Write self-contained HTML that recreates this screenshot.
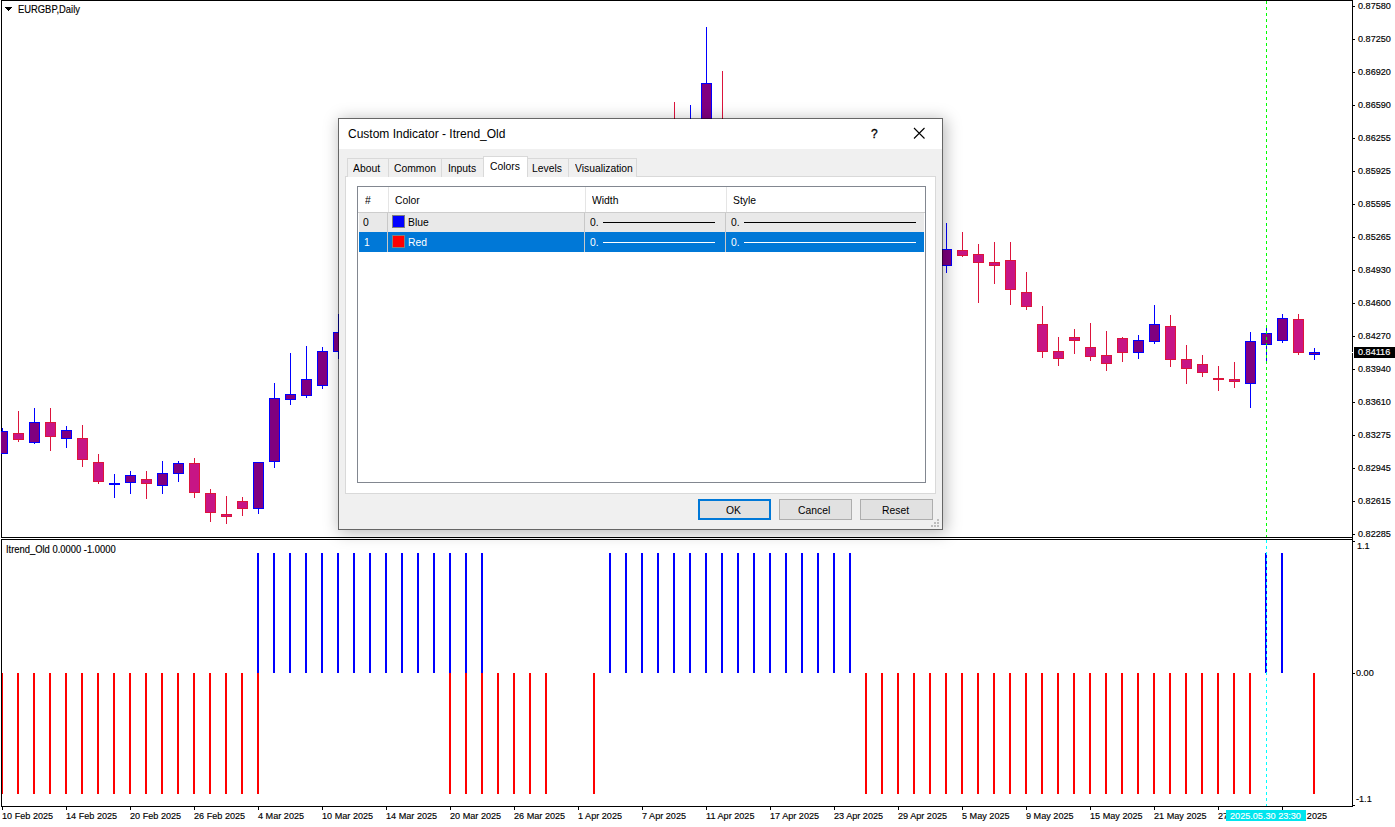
<!DOCTYPE html>
<html><head><meta charset="utf-8"><style>
html,body{margin:0;padding:0;background:#fff;width:1395px;height:827px;overflow:hidden;position:relative}
.ax{position:absolute;font-family:"Liberation Sans",sans-serif;font-size:9.8px;line-height:13px;color:#000;white-space:pre;transform:scaleX(.93);transform-origin:0 0;-webkit-text-stroke:0.15px currentColor}
.dl{position:absolute;font-family:"Liberation Sans",sans-serif;font-size:11px;line-height:14px;color:#000;white-space:pre;transform:scaleX(.94);transform-origin:0 0}
</style></head><body>
<svg width="1395" height="827" style="position:absolute;left:0;top:0" shape-rendering="crispEdges"><rect x="257" y="553" width="2" height="120" fill="#0000FF"/><rect x="273" y="553" width="2" height="120" fill="#0000FF"/><rect x="289" y="553" width="2" height="120" fill="#0000FF"/><rect x="305" y="553" width="2" height="120" fill="#0000FF"/><rect x="321" y="553" width="2" height="120" fill="#0000FF"/><rect x="337" y="553" width="2" height="120" fill="#0000FF"/><rect x="353" y="553" width="2" height="120" fill="#0000FF"/><rect x="369" y="553" width="2" height="120" fill="#0000FF"/><rect x="385" y="553" width="2" height="120" fill="#0000FF"/><rect x="401" y="553" width="2" height="120" fill="#0000FF"/><rect x="417" y="553" width="2" height="120" fill="#0000FF"/><rect x="433" y="553" width="2" height="120" fill="#0000FF"/><rect x="449" y="553" width="2" height="120" fill="#0000FF"/><rect x="465" y="553" width="2" height="120" fill="#0000FF"/><rect x="481" y="553" width="2" height="120" fill="#0000FF"/><rect x="609" y="553" width="2" height="120" fill="#0000FF"/><rect x="625" y="553" width="2" height="120" fill="#0000FF"/><rect x="641" y="553" width="2" height="120" fill="#0000FF"/><rect x="657" y="553" width="2" height="120" fill="#0000FF"/><rect x="673" y="553" width="2" height="120" fill="#0000FF"/><rect x="689" y="553" width="2" height="120" fill="#0000FF"/><rect x="705" y="553" width="2" height="120" fill="#0000FF"/><rect x="721" y="553" width="2" height="120" fill="#0000FF"/><rect x="737" y="553" width="2" height="120" fill="#0000FF"/><rect x="753" y="553" width="2" height="120" fill="#0000FF"/><rect x="769" y="553" width="2" height="120" fill="#0000FF"/><rect x="785" y="553" width="2" height="120" fill="#0000FF"/><rect x="801" y="553" width="2" height="120" fill="#0000FF"/><rect x="817" y="553" width="2" height="120" fill="#0000FF"/><rect x="833" y="553" width="2" height="120" fill="#0000FF"/><rect x="849" y="553" width="2" height="120" fill="#0000FF"/><rect x="1265" y="553" width="2" height="120" fill="#0000FF"/><rect x="1281" y="553" width="2" height="120" fill="#0000FF"/><rect x="1" y="673" width="2" height="121" fill="#FF0000"/><rect x="17" y="673" width="2" height="121" fill="#FF0000"/><rect x="33" y="673" width="2" height="121" fill="#FF0000"/><rect x="49" y="673" width="2" height="121" fill="#FF0000"/><rect x="65" y="673" width="2" height="121" fill="#FF0000"/><rect x="81" y="673" width="2" height="121" fill="#FF0000"/><rect x="97" y="673" width="2" height="121" fill="#FF0000"/><rect x="113" y="673" width="2" height="121" fill="#FF0000"/><rect x="129" y="673" width="2" height="121" fill="#FF0000"/><rect x="145" y="673" width="2" height="121" fill="#FF0000"/><rect x="161" y="673" width="2" height="121" fill="#FF0000"/><rect x="177" y="673" width="2" height="121" fill="#FF0000"/><rect x="193" y="673" width="2" height="121" fill="#FF0000"/><rect x="209" y="673" width="2" height="121" fill="#FF0000"/><rect x="225" y="673" width="2" height="121" fill="#FF0000"/><rect x="241" y="673" width="2" height="121" fill="#FF0000"/><rect x="257" y="673" width="2" height="121" fill="#FF0000"/><rect x="449" y="673" width="2" height="121" fill="#FF0000"/><rect x="465" y="673" width="2" height="121" fill="#FF0000"/><rect x="481" y="673" width="2" height="121" fill="#FF0000"/><rect x="497" y="673" width="2" height="121" fill="#FF0000"/><rect x="513" y="673" width="2" height="121" fill="#FF0000"/><rect x="529" y="673" width="2" height="121" fill="#FF0000"/><rect x="545" y="673" width="2" height="121" fill="#FF0000"/><rect x="593" y="673" width="2" height="121" fill="#FF0000"/><rect x="865" y="673" width="2" height="121" fill="#FF0000"/><rect x="881" y="673" width="2" height="121" fill="#FF0000"/><rect x="897" y="673" width="2" height="121" fill="#FF0000"/><rect x="913" y="673" width="2" height="121" fill="#FF0000"/><rect x="929" y="673" width="2" height="121" fill="#FF0000"/><rect x="945" y="673" width="2" height="121" fill="#FF0000"/><rect x="961" y="673" width="2" height="121" fill="#FF0000"/><rect x="977" y="673" width="2" height="121" fill="#FF0000"/><rect x="993" y="673" width="2" height="121" fill="#FF0000"/><rect x="1009" y="673" width="2" height="121" fill="#FF0000"/><rect x="1025" y="673" width="2" height="121" fill="#FF0000"/><rect x="1041" y="673" width="2" height="121" fill="#FF0000"/><rect x="1057" y="673" width="2" height="121" fill="#FF0000"/><rect x="1073" y="673" width="2" height="121" fill="#FF0000"/><rect x="1089" y="673" width="2" height="121" fill="#FF0000"/><rect x="1105" y="673" width="2" height="121" fill="#FF0000"/><rect x="1121" y="673" width="2" height="121" fill="#FF0000"/><rect x="1137" y="673" width="2" height="121" fill="#FF0000"/><rect x="1153" y="673" width="2" height="121" fill="#FF0000"/><rect x="1169" y="673" width="2" height="121" fill="#FF0000"/><rect x="1185" y="673" width="2" height="121" fill="#FF0000"/><rect x="1201" y="673" width="2" height="121" fill="#FF0000"/><rect x="1217" y="673" width="2" height="121" fill="#FF0000"/><rect x="1233" y="673" width="2" height="121" fill="#FF0000"/><rect x="1249" y="673" width="2" height="121" fill="#FF0000"/><rect x="1313" y="673" width="2" height="121" fill="#FF0000"/><rect x="1" y="0" width="1352" height="1" fill="#000000"/><rect x="1" y="0" width="1" height="538" fill="#000000"/><rect x="1" y="537" width="1352" height="1" fill="#000000"/><rect x="1" y="539" width="1352" height="1" fill="#000000"/><rect x="1" y="539" width="1" height="268" fill="#000000"/><rect x="1" y="806" width="1352" height="1" fill="#000000"/><rect x="1352" y="0" width="1" height="807" fill="#000000"/><rect x="1353" y="6" width="2" height="1" fill="#000000"/><rect x="1353" y="39" width="2" height="1" fill="#000000"/><rect x="1353" y="72" width="2" height="1" fill="#000000"/><rect x="1353" y="105" width="2" height="1" fill="#000000"/><rect x="1353" y="138" width="2" height="1" fill="#000000"/><rect x="1353" y="171" width="2" height="1" fill="#000000"/><rect x="1353" y="204" width="2" height="1" fill="#000000"/><rect x="1353" y="237" width="2" height="1" fill="#000000"/><rect x="1353" y="270" width="2" height="1" fill="#000000"/><rect x="1353" y="303" width="2" height="1" fill="#000000"/><rect x="1353" y="336" width="2" height="1" fill="#000000"/><rect x="1353" y="369" width="2" height="1" fill="#000000"/><rect x="1353" y="402" width="2" height="1" fill="#000000"/><rect x="1353" y="435" width="2" height="1" fill="#000000"/><rect x="1353" y="468" width="2" height="1" fill="#000000"/><rect x="1353" y="501" width="2" height="1" fill="#000000"/><rect x="1353" y="534" width="2" height="1" fill="#000000"/><rect x="1353" y="541" width="2" height="1" fill="#000000"/><rect x="1353" y="673" width="2" height="1" fill="#000000"/><rect x="1353" y="805" width="2" height="1" fill="#000000"/><rect x="2" y="807" width="1" height="3" fill="#000000"/><rect x="66" y="807" width="1" height="3" fill="#000000"/><rect x="130" y="807" width="1" height="3" fill="#000000"/><rect x="194" y="807" width="1" height="3" fill="#000000"/><rect x="258" y="807" width="1" height="3" fill="#000000"/><rect x="322" y="807" width="1" height="3" fill="#000000"/><rect x="386" y="807" width="1" height="3" fill="#000000"/><rect x="450" y="807" width="1" height="3" fill="#000000"/><rect x="514" y="807" width="1" height="3" fill="#000000"/><rect x="578" y="807" width="1" height="3" fill="#000000"/><rect x="642" y="807" width="1" height="3" fill="#000000"/><rect x="706" y="807" width="1" height="3" fill="#000000"/><rect x="770" y="807" width="1" height="3" fill="#000000"/><rect x="834" y="807" width="1" height="3" fill="#000000"/><rect x="898" y="807" width="1" height="3" fill="#000000"/><rect x="962" y="807" width="1" height="3" fill="#000000"/><rect x="1026" y="807" width="1" height="3" fill="#000000"/><rect x="1090" y="807" width="1" height="3" fill="#000000"/><rect x="1154" y="807" width="1" height="3" fill="#000000"/><rect x="1218" y="807" width="1" height="3" fill="#000000"/><rect x="1282" y="807" width="1" height="3" fill="#000000"/><rect x="5" y="7" width="7" height="1" fill="#000000"/><rect x="6" y="8" width="5" height="1" fill="#000000"/><rect x="7" y="9" width="3" height="1" fill="#000000"/><rect x="8" y="10" width="1" height="1" fill="#000000"/><rect x="1352" y="352" width="1" height="1" fill="#FFFFFF"/><rect x="1354" y="347" width="41" height="11" fill="#000000"/><rect x="2" y="428" width="1" height="26" fill="#0000FF"/><rect x="1" y="431" width="7" height="23" fill="#0000FF"/><rect x="1" y="432" width="6" height="21" fill="#800080"/><rect x="18" y="411" width="1" height="31" fill="#DC143C"/><rect x="13" y="433" width="11" height="7" fill="#DC143C"/><rect x="14" y="434" width="9" height="5" fill="#C71585"/><rect x="34" y="408" width="1" height="36" fill="#0000FF"/><rect x="29" y="422" width="11" height="21" fill="#0000FF"/><rect x="30" y="423" width="9" height="19" fill="#800080"/><rect x="50" y="408" width="1" height="43" fill="#DC143C"/><rect x="45" y="422" width="11" height="15" fill="#DC143C"/><rect x="46" y="423" width="9" height="13" fill="#C71585"/><rect x="66" y="426" width="1" height="22" fill="#0000FF"/><rect x="61" y="430" width="11" height="9" fill="#0000FF"/><rect x="62" y="431" width="9" height="7" fill="#800080"/><rect x="82" y="425" width="1" height="42" fill="#DC143C"/><rect x="77" y="438" width="11" height="22" fill="#DC143C"/><rect x="78" y="439" width="9" height="20" fill="#C71585"/><rect x="98" y="454" width="1" height="30" fill="#DC143C"/><rect x="93" y="462" width="11" height="20" fill="#DC143C"/><rect x="94" y="463" width="9" height="18" fill="#C71585"/><rect x="114" y="474" width="1" height="24" fill="#0000FF"/><rect x="109" y="483" width="11" height="2" fill="#0000FF"/><rect x="130" y="471" width="1" height="23" fill="#0000FF"/><rect x="125" y="475" width="11" height="8" fill="#0000FF"/><rect x="126" y="476" width="9" height="6" fill="#800080"/><rect x="146" y="471" width="1" height="28" fill="#DC143C"/><rect x="141" y="479" width="11" height="5" fill="#DC143C"/><rect x="142" y="480" width="9" height="3" fill="#C71585"/><rect x="162" y="461" width="1" height="33" fill="#0000FF"/><rect x="157" y="473" width="11" height="13" fill="#0000FF"/><rect x="158" y="474" width="9" height="11" fill="#800080"/><rect x="178" y="461" width="1" height="21" fill="#0000FF"/><rect x="173" y="463" width="11" height="11" fill="#0000FF"/><rect x="174" y="464" width="9" height="9" fill="#800080"/><rect x="194" y="458" width="1" height="40" fill="#DC143C"/><rect x="189" y="463" width="11" height="30" fill="#DC143C"/><rect x="190" y="464" width="9" height="28" fill="#C71585"/><rect x="210" y="489" width="1" height="33" fill="#DC143C"/><rect x="205" y="493" width="11" height="20" fill="#DC143C"/><rect x="206" y="494" width="9" height="18" fill="#C71585"/><rect x="226" y="496" width="1" height="28" fill="#DC143C"/><rect x="221" y="514" width="11" height="3" fill="#DC143C"/><rect x="222" y="515" width="9" height="1" fill="#C71585"/><rect x="242" y="497" width="1" height="19" fill="#DC143C"/><rect x="237" y="501" width="11" height="8" fill="#DC143C"/><rect x="238" y="502" width="9" height="6" fill="#C71585"/><rect x="258" y="462" width="1" height="52" fill="#0000FF"/><rect x="253" y="462" width="11" height="47" fill="#0000FF"/><rect x="254" y="463" width="9" height="45" fill="#800080"/><rect x="274" y="383" width="1" height="85" fill="#0000FF"/><rect x="269" y="398" width="11" height="64" fill="#0000FF"/><rect x="270" y="399" width="9" height="62" fill="#800080"/><rect x="290" y="353" width="1" height="52" fill="#0000FF"/><rect x="285" y="394" width="11" height="6" fill="#0000FF"/><rect x="286" y="395" width="9" height="4" fill="#800080"/><rect x="306" y="346" width="1" height="52" fill="#0000FF"/><rect x="301" y="379" width="11" height="17" fill="#0000FF"/><rect x="302" y="380" width="9" height="15" fill="#800080"/><rect x="322" y="347" width="1" height="42" fill="#0000FF"/><rect x="317" y="351" width="11" height="35" fill="#0000FF"/><rect x="318" y="352" width="9" height="33" fill="#800080"/><rect x="338" y="314" width="1" height="45" fill="#0000FF"/><rect x="333" y="332" width="11" height="20" fill="#0000FF"/><rect x="334" y="333" width="9" height="18" fill="#800080"/><rect x="674" y="102" width="1" height="49" fill="#DC143C"/><rect x="669" y="120" width="11" height="21" fill="#DC143C"/><rect x="670" y="121" width="9" height="19" fill="#C71585"/><rect x="690" y="105" width="1" height="46" fill="#0000FF"/><rect x="685" y="120" width="11" height="21" fill="#0000FF"/><rect x="686" y="121" width="9" height="19" fill="#800080"/><rect x="706" y="27" width="1" height="124" fill="#0000FF"/><rect x="701" y="83" width="11" height="58" fill="#0000FF"/><rect x="702" y="84" width="9" height="56" fill="#800080"/><rect x="722" y="71" width="1" height="80" fill="#DC143C"/><rect x="717" y="120" width="11" height="21" fill="#DC143C"/><rect x="718" y="121" width="9" height="19" fill="#C71585"/><rect x="946" y="223" width="1" height="50" fill="#0000FF"/><rect x="941" y="249" width="11" height="17" fill="#0000FF"/><rect x="942" y="250" width="9" height="15" fill="#800080"/><rect x="962" y="232" width="1" height="25" fill="#DC143C"/><rect x="957" y="250" width="11" height="6" fill="#DC143C"/><rect x="958" y="251" width="9" height="4" fill="#C71585"/><rect x="978" y="244" width="1" height="59" fill="#DC143C"/><rect x="973" y="254" width="11" height="9" fill="#DC143C"/><rect x="974" y="255" width="9" height="7" fill="#C71585"/><rect x="994" y="242" width="1" height="42" fill="#DC143C"/><rect x="989" y="262" width="11" height="4" fill="#DC143C"/><rect x="990" y="263" width="9" height="2" fill="#C71585"/><rect x="1010" y="242" width="1" height="63" fill="#DC143C"/><rect x="1005" y="260" width="11" height="30" fill="#DC143C"/><rect x="1006" y="261" width="9" height="28" fill="#C71585"/><rect x="1026" y="272" width="1" height="38" fill="#DC143C"/><rect x="1021" y="292" width="11" height="15" fill="#DC143C"/><rect x="1022" y="293" width="9" height="13" fill="#C71585"/><rect x="1042" y="306" width="1" height="52" fill="#DC143C"/><rect x="1037" y="324" width="11" height="28" fill="#DC143C"/><rect x="1038" y="325" width="9" height="26" fill="#C71585"/><rect x="1058" y="337" width="1" height="29" fill="#DC143C"/><rect x="1053" y="351" width="11" height="8" fill="#DC143C"/><rect x="1054" y="352" width="9" height="6" fill="#C71585"/><rect x="1074" y="329" width="1" height="25" fill="#DC143C"/><rect x="1069" y="337" width="11" height="4" fill="#DC143C"/><rect x="1070" y="338" width="9" height="2" fill="#C71585"/><rect x="1090" y="323" width="1" height="38" fill="#DC143C"/><rect x="1085" y="347" width="11" height="10" fill="#DC143C"/><rect x="1086" y="348" width="9" height="8" fill="#C71585"/><rect x="1106" y="331" width="1" height="40" fill="#DC143C"/><rect x="1101" y="355" width="11" height="9" fill="#DC143C"/><rect x="1102" y="356" width="9" height="7" fill="#C71585"/><rect x="1122" y="337" width="1" height="25" fill="#DC143C"/><rect x="1117" y="338" width="11" height="15" fill="#DC143C"/><rect x="1118" y="339" width="9" height="13" fill="#C71585"/><rect x="1138" y="335" width="1" height="24" fill="#0000FF"/><rect x="1133" y="340" width="11" height="13" fill="#0000FF"/><rect x="1134" y="341" width="9" height="11" fill="#800080"/><rect x="1154" y="305" width="1" height="39" fill="#0000FF"/><rect x="1149" y="324" width="11" height="18" fill="#0000FF"/><rect x="1150" y="325" width="9" height="16" fill="#800080"/><rect x="1170" y="315" width="1" height="52" fill="#DC143C"/><rect x="1165" y="326" width="11" height="34" fill="#DC143C"/><rect x="1166" y="327" width="9" height="32" fill="#C71585"/><rect x="1186" y="345" width="1" height="39" fill="#DC143C"/><rect x="1181" y="359" width="11" height="10" fill="#DC143C"/><rect x="1182" y="360" width="9" height="8" fill="#C71585"/><rect x="1202" y="355" width="1" height="22" fill="#DC143C"/><rect x="1197" y="364" width="11" height="9" fill="#DC143C"/><rect x="1198" y="365" width="9" height="7" fill="#C71585"/><rect x="1218" y="366" width="1" height="25" fill="#DC143C"/><rect x="1213" y="378" width="11" height="2" fill="#DC143C"/><rect x="1234" y="362" width="1" height="26" fill="#DC143C"/><rect x="1229" y="379" width="11" height="3" fill="#DC143C"/><rect x="1230" y="380" width="9" height="1" fill="#C71585"/><rect x="1250" y="332" width="1" height="76" fill="#0000FF"/><rect x="1245" y="341" width="11" height="43" fill="#0000FF"/><rect x="1246" y="342" width="9" height="41" fill="#800080"/><rect x="1266" y="328" width="1" height="33" fill="#0000FF"/><rect x="1261" y="333" width="11" height="12" fill="#0000FF"/><rect x="1262" y="334" width="9" height="10" fill="#800080"/><rect x="1282" y="314" width="1" height="29" fill="#0000FF"/><rect x="1277" y="318" width="11" height="23" fill="#0000FF"/><rect x="1278" y="319" width="9" height="21" fill="#800080"/><rect x="1298" y="314" width="1" height="41" fill="#DC143C"/><rect x="1293" y="319" width="11" height="34" fill="#DC143C"/><rect x="1294" y="320" width="9" height="32" fill="#C71585"/><rect x="1314" y="348" width="1" height="12" fill="#0000FF"/><rect x="1309" y="352" width="11" height="3" fill="#0000FF"/><rect x="1310" y="353" width="9" height="1" fill="#800080"/><rect x="1266" y="1" width="1" height="3" fill="#00FF00"/><rect x="1266" y="7" width="1" height="3" fill="#00FF00"/><rect x="1266" y="13" width="1" height="3" fill="#00FF00"/><rect x="1266" y="19" width="1" height="3" fill="#00FF00"/><rect x="1266" y="25" width="1" height="3" fill="#00FF00"/><rect x="1266" y="31" width="1" height="3" fill="#00FF00"/><rect x="1266" y="37" width="1" height="3" fill="#00FF00"/><rect x="1266" y="43" width="1" height="3" fill="#00FF00"/><rect x="1266" y="49" width="1" height="3" fill="#00FF00"/><rect x="1266" y="55" width="1" height="3" fill="#00FF00"/><rect x="1266" y="61" width="1" height="3" fill="#00FF00"/><rect x="1266" y="67" width="1" height="3" fill="#00FF00"/><rect x="1266" y="73" width="1" height="3" fill="#00FF00"/><rect x="1266" y="79" width="1" height="3" fill="#00FF00"/><rect x="1266" y="85" width="1" height="3" fill="#00FF00"/><rect x="1266" y="91" width="1" height="3" fill="#00FF00"/><rect x="1266" y="97" width="1" height="3" fill="#00FF00"/><rect x="1266" y="103" width="1" height="3" fill="#00FF00"/><rect x="1266" y="109" width="1" height="3" fill="#00FF00"/><rect x="1266" y="115" width="1" height="3" fill="#00FF00"/><rect x="1266" y="121" width="1" height="3" fill="#00FF00"/><rect x="1266" y="127" width="1" height="3" fill="#00FF00"/><rect x="1266" y="133" width="1" height="3" fill="#00FF00"/><rect x="1266" y="139" width="1" height="3" fill="#00FF00"/><rect x="1266" y="145" width="1" height="3" fill="#00FF00"/><rect x="1266" y="151" width="1" height="3" fill="#00FF00"/><rect x="1266" y="157" width="1" height="3" fill="#00FF00"/><rect x="1266" y="163" width="1" height="3" fill="#00FF00"/><rect x="1266" y="169" width="1" height="3" fill="#00FF00"/><rect x="1266" y="175" width="1" height="3" fill="#00FF00"/><rect x="1266" y="181" width="1" height="3" fill="#00FF00"/><rect x="1266" y="187" width="1" height="3" fill="#00FF00"/><rect x="1266" y="193" width="1" height="3" fill="#00FF00"/><rect x="1266" y="199" width="1" height="3" fill="#00FF00"/><rect x="1266" y="205" width="1" height="3" fill="#00FF00"/><rect x="1266" y="211" width="1" height="3" fill="#00FF00"/><rect x="1266" y="217" width="1" height="3" fill="#00FF00"/><rect x="1266" y="223" width="1" height="3" fill="#00FF00"/><rect x="1266" y="229" width="1" height="3" fill="#00FF00"/><rect x="1266" y="235" width="1" height="3" fill="#00FF00"/><rect x="1266" y="241" width="1" height="3" fill="#00FF00"/><rect x="1266" y="247" width="1" height="3" fill="#00FF00"/><rect x="1266" y="253" width="1" height="3" fill="#00FF00"/><rect x="1266" y="259" width="1" height="3" fill="#00FF00"/><rect x="1266" y="265" width="1" height="3" fill="#00FF00"/><rect x="1266" y="271" width="1" height="3" fill="#00FF00"/><rect x="1266" y="277" width="1" height="3" fill="#00FF00"/><rect x="1266" y="283" width="1" height="3" fill="#00FF00"/><rect x="1266" y="289" width="1" height="3" fill="#00FF00"/><rect x="1266" y="295" width="1" height="3" fill="#00FF00"/><rect x="1266" y="301" width="1" height="3" fill="#00FF00"/><rect x="1266" y="307" width="1" height="3" fill="#00FF00"/><rect x="1266" y="313" width="1" height="3" fill="#00FF00"/><rect x="1266" y="319" width="1" height="3" fill="#00FF00"/><rect x="1266" y="325" width="1" height="3" fill="#00FF00"/><rect x="1266" y="331" width="1" height="3" fill="#00FF00"/><rect x="1266" y="337" width="1" height="3" fill="#00FF00"/><rect x="1266" y="343" width="1" height="3" fill="#00FF00"/><rect x="1266" y="349" width="1" height="3" fill="#00FF00"/><rect x="1266" y="355" width="1" height="3" fill="#00FF00"/><rect x="1266" y="361" width="1" height="3" fill="#00FF00"/><rect x="1266" y="367" width="1" height="3" fill="#00FF00"/><rect x="1266" y="373" width="1" height="3" fill="#00FF00"/><rect x="1266" y="379" width="1" height="3" fill="#00FF00"/><rect x="1266" y="385" width="1" height="3" fill="#00FF00"/><rect x="1266" y="391" width="1" height="3" fill="#00FF00"/><rect x="1266" y="397" width="1" height="3" fill="#00FF00"/><rect x="1266" y="403" width="1" height="3" fill="#00FF00"/><rect x="1266" y="409" width="1" height="3" fill="#00FF00"/><rect x="1266" y="415" width="1" height="3" fill="#00FF00"/><rect x="1266" y="421" width="1" height="3" fill="#00FF00"/><rect x="1266" y="427" width="1" height="3" fill="#00FF00"/><rect x="1266" y="433" width="1" height="3" fill="#00FF00"/><rect x="1266" y="439" width="1" height="3" fill="#00FF00"/><rect x="1266" y="445" width="1" height="3" fill="#00FF00"/><rect x="1266" y="451" width="1" height="3" fill="#00FF00"/><rect x="1266" y="457" width="1" height="3" fill="#00FF00"/><rect x="1266" y="463" width="1" height="3" fill="#00FF00"/><rect x="1266" y="469" width="1" height="3" fill="#00FF00"/><rect x="1266" y="475" width="1" height="3" fill="#00FF00"/><rect x="1266" y="481" width="1" height="3" fill="#00FF00"/><rect x="1266" y="487" width="1" height="3" fill="#00FF00"/><rect x="1266" y="493" width="1" height="3" fill="#00FF00"/><rect x="1266" y="499" width="1" height="3" fill="#00FF00"/><rect x="1266" y="505" width="1" height="3" fill="#00FF00"/><rect x="1266" y="511" width="1" height="3" fill="#00FF00"/><rect x="1266" y="517" width="1" height="3" fill="#00FF00"/><rect x="1266" y="523" width="1" height="3" fill="#00FF00"/><rect x="1266" y="529" width="1" height="3" fill="#00FF00"/><rect x="1266" y="535" width="1" height="2" fill="#00FF00"/><rect x="1266" y="540" width="1" height="3" fill="#00FFFF"/><rect x="1266" y="546" width="1" height="3" fill="#00FFFF"/><rect x="1266" y="552" width="1" height="3" fill="#00FFFF"/><rect x="1266" y="558" width="1" height="3" fill="#00FFFF"/><rect x="1266" y="564" width="1" height="3" fill="#00FFFF"/><rect x="1266" y="570" width="1" height="3" fill="#00FFFF"/><rect x="1266" y="576" width="1" height="3" fill="#00FFFF"/><rect x="1266" y="582" width="1" height="3" fill="#00FFFF"/><rect x="1266" y="588" width="1" height="3" fill="#00FFFF"/><rect x="1266" y="594" width="1" height="3" fill="#00FFFF"/><rect x="1266" y="600" width="1" height="3" fill="#00FFFF"/><rect x="1266" y="606" width="1" height="3" fill="#00FFFF"/><rect x="1266" y="612" width="1" height="3" fill="#00FFFF"/><rect x="1266" y="618" width="1" height="3" fill="#00FFFF"/><rect x="1266" y="624" width="1" height="3" fill="#00FFFF"/><rect x="1266" y="630" width="1" height="3" fill="#00FFFF"/><rect x="1266" y="636" width="1" height="3" fill="#00FFFF"/><rect x="1266" y="642" width="1" height="3" fill="#00FFFF"/><rect x="1266" y="648" width="1" height="3" fill="#00FFFF"/><rect x="1266" y="654" width="1" height="3" fill="#00FFFF"/><rect x="1266" y="660" width="1" height="3" fill="#00FFFF"/><rect x="1266" y="666" width="1" height="3" fill="#00FFFF"/><rect x="1266" y="672" width="1" height="3" fill="#00FFFF"/><rect x="1266" y="678" width="1" height="3" fill="#00FFFF"/><rect x="1266" y="684" width="1" height="3" fill="#00FFFF"/><rect x="1266" y="690" width="1" height="3" fill="#00FFFF"/><rect x="1266" y="696" width="1" height="3" fill="#00FFFF"/><rect x="1266" y="702" width="1" height="3" fill="#00FFFF"/><rect x="1266" y="708" width="1" height="3" fill="#00FFFF"/><rect x="1266" y="714" width="1" height="3" fill="#00FFFF"/><rect x="1266" y="720" width="1" height="3" fill="#00FFFF"/><rect x="1266" y="726" width="1" height="3" fill="#00FFFF"/><rect x="1266" y="732" width="1" height="3" fill="#00FFFF"/><rect x="1266" y="738" width="1" height="3" fill="#00FFFF"/><rect x="1266" y="744" width="1" height="3" fill="#00FFFF"/><rect x="1266" y="750" width="1" height="3" fill="#00FFFF"/><rect x="1266" y="756" width="1" height="3" fill="#00FFFF"/><rect x="1266" y="762" width="1" height="3" fill="#00FFFF"/><rect x="1266" y="768" width="1" height="3" fill="#00FFFF"/><rect x="1266" y="774" width="1" height="3" fill="#00FFFF"/><rect x="1266" y="780" width="1" height="3" fill="#00FFFF"/><rect x="1266" y="786" width="1" height="3" fill="#00FFFF"/><rect x="1266" y="792" width="1" height="3" fill="#00FFFF"/><rect x="1266" y="798" width="1" height="3" fill="#00FFFF"/><rect x="1266" y="804" width="1" height="2" fill="#00FFFF"/></svg>
<div class="ax" style="left:1358px;top:-1px;">0.87580</div><div class="ax" style="left:1358px;top:32px;">0.87250</div><div class="ax" style="left:1358px;top:65px;">0.86920</div><div class="ax" style="left:1358px;top:98px;">0.86590</div><div class="ax" style="left:1358px;top:131px;">0.86255</div><div class="ax" style="left:1358px;top:164px;">0.85925</div><div class="ax" style="left:1358px;top:197px;">0.85595</div><div class="ax" style="left:1358px;top:230px;">0.85265</div><div class="ax" style="left:1358px;top:263px;">0.84930</div><div class="ax" style="left:1358px;top:296px;">0.84600</div><div class="ax" style="left:1358px;top:329px;">0.84270</div><div class="ax" style="left:1358px;top:362px;">0.83940</div><div class="ax" style="left:1358px;top:395px;">0.83610</div><div class="ax" style="left:1358px;top:428px;">0.83275</div><div class="ax" style="left:1358px;top:461px;">0.82945</div><div class="ax" style="left:1358px;top:494px;">0.82615</div><div class="ax" style="left:1358px;top:527px;">0.82285</div><div class="ax" style="left:1358px;top:345px;color:#fff">0.84116</div><div class="ax" style="left:1357px;top:539px;">1.1</div><div class="ax" style="left:1356px;top:666px;">0.00</div><div class="ax" style="left:1356px;top:792px;">-1.1</div><div class="ax" style="left:2px;top:809px;">10 Feb 2025</div><div class="ax" style="left:66px;top:809px;">14 Feb 2025</div><div class="ax" style="left:130px;top:809px;">20 Feb 2025</div><div class="ax" style="left:194px;top:809px;">26 Feb 2025</div><div class="ax" style="left:258px;top:809px;">4 Mar 2025</div><div class="ax" style="left:322px;top:809px;">10 Mar 2025</div><div class="ax" style="left:386px;top:809px;">14 Mar 2025</div><div class="ax" style="left:450px;top:809px;">20 Mar 2025</div><div class="ax" style="left:514px;top:809px;">26 Mar 2025</div><div class="ax" style="left:578px;top:809px;">1 Apr 2025</div><div class="ax" style="left:642px;top:809px;">7 Apr 2025</div><div class="ax" style="left:706px;top:809px;">11 Apr 2025</div><div class="ax" style="left:770px;top:809px;">17 Apr 2025</div><div class="ax" style="left:834px;top:809px;">23 Apr 2025</div><div class="ax" style="left:898px;top:809px;">29 Apr 2025</div><div class="ax" style="left:962px;top:809px;">5 May 2025</div><div class="ax" style="left:1026px;top:809px;">9 May 2025</div><div class="ax" style="left:1090px;top:809px;">15 May 2025</div><div class="ax" style="left:1154px;top:809px;">21 May 2025</div><div class="ax" style="left:1218px;top:809px;">27</div><div class="ax" style="left:1282px;top:809px;">2 Jun 2025</div><div class="ax" style="left:18px;top:3px;font-size:10.1px">EURGBP,Daily</div><div class="ax" style="left:6px;top:543px;font-size:10.1px">Itrend_Old 0.0000 -1.0000</div>
<div style="position:absolute;left:1226px;top:810px;width:80px;height:11px;background:#00E5EE"></div><div class="ax" style="left:1230px;top:809px;color:#fff;font-size:9.8px">2025.05.30 23:30</div>
<div style="position:absolute;left:338px;top:118px;width:605px;height:412px;box-shadow:2px 2px 15px 1px rgba(0,0,0,0.27)"></div>
<div style="position:absolute;left:338px;top:118px;width:605px;height:412px;box-sizing:border-box;border:1px solid rgba(0,0,0,0.6);background:#F0F0F0;background-clip:padding-box"></div>
<div style="position:absolute;left:339px;top:119px;width:603px;height:30px;background:#fff"></div>
<div class="dl" style="left:348px;top:127px;font-size:12px;transform:none">Custom Indicator - Itrend_Old</div>
<div class="dl" style="left:871px;top:127px;font-size:12px;transform:none;-webkit-text-stroke:0.3px #000">?</div>
<svg style="position:absolute;left:913px;top:127px" width="13" height="13"><path d="M1 1 L11.5 11.5 M11.5 1 L1 11.5" stroke="#000" stroke-width="1.1" fill="none"/></svg>
<!-- tab panel -->
<div style="position:absolute;left:345px;top:176px;width:591px;height:318px;box-sizing:border-box;border:1px solid #D9D9D9;background:#fff"></div>
<!-- tabs -->
<div style="position:absolute;left:347px;top:158px;width:42px;height:19px;box-sizing:border-box;border:1px solid #D9D9D9;border-bottom:none;background:#F0F0F0"></div>
<div style="position:absolute;left:388px;top:158px;width:54px;height:19px;box-sizing:border-box;border:1px solid #D9D9D9;border-bottom:none;background:#F0F0F0"></div>
<div style="position:absolute;left:441px;top:158px;width:43px;height:19px;box-sizing:border-box;border:1px solid #D9D9D9;border-bottom:none;background:#F0F0F0"></div>
<div style="position:absolute;left:527px;top:158px;width:42px;height:19px;box-sizing:border-box;border:1px solid #D9D9D9;border-bottom:none;background:#F0F0F0"></div>
<div style="position:absolute;left:568px;top:158px;width:69px;height:19px;box-sizing:border-box;border:1px solid #D9D9D9;border-bottom:none;background:#F0F0F0"></div>
<div style="position:absolute;left:483px;top:156px;width:45px;height:21px;box-sizing:border-box;border:1px solid #D9D9D9;border-bottom:none;background:#fff"></div>
<div class="dl" style="left:353px;top:161px">About</div>
<div class="dl" style="left:394px;top:161px">Common</div>
<div class="dl" style="left:448px;top:161px">Inputs</div>
<div class="dl" style="left:490px;top:159px">Colors</div>
<div class="dl" style="left:532px;top:161px">Levels</div>
<div class="dl" style="left:575px;top:161px">Visualization</div>
<!-- listview -->
<div style="position:absolute;left:357px;top:186px;width:569px;height:297px;box-sizing:border-box;border:1px solid #828790;background:#fff"></div>
<div style="position:absolute;left:358px;top:212px;width:567px;height:1px;background:#CDCDCD"></div>
<div style="position:absolute;left:388px;top:187px;width:1px;height:25px;background:#E5E5E5"></div>
<div style="position:absolute;left:585px;top:187px;width:1px;height:25px;background:#E5E5E5"></div>
<div style="position:absolute;left:726px;top:187px;width:1px;height:25px;background:#E5E5E5"></div>
<div style="position:absolute;left:359px;top:213px;width:565px;height:19px;background:#E9E9E9"></div>
<div style="position:absolute;left:359px;top:232px;width:565px;height:20px;background:#0078D7"></div>
<div style="position:absolute;left:387px;top:213px;width:1px;height:39px;background:#C8C8C8"></div>
<div style="position:absolute;left:584px;top:213px;width:1px;height:39px;background:#C8C8C8"></div>
<div style="position:absolute;left:725px;top:213px;width:1px;height:39px;background:#C8C8C8"></div>
<div class="dl" style="left:365px;top:193px">#</div>
<div class="dl" style="left:395px;top:193px">Color</div>
<div class="dl" style="left:592px;top:193px">Width</div>
<div class="dl" style="left:733px;top:193px">Style</div>
<div class="dl" style="left:363px;top:215px">0</div>
<div style="position:absolute;left:392px;top:215px;width:13px;height:13px;box-sizing:border-box;border:1px solid #808080;background:#0000FF"></div>
<div class="dl" style="left:408px;top:215px">Blue</div>
<div class="dl" style="left:590px;top:215px">0.</div>
<div style="position:absolute;left:603px;top:222px;width:112px;height:1px;background:#000"></div>
<div class="dl" style="left:731px;top:215px">0.</div>
<div style="position:absolute;left:744px;top:222px;width:172px;height:1px;background:#000"></div>
<div class="dl" style="left:364px;top:235px;color:#fff">1</div>
<div style="position:absolute;left:392px;top:235px;width:13px;height:13px;box-sizing:border-box;border:1px solid #808080;background:#FF0000"></div>
<div class="dl" style="left:408px;top:235px;color:#fff">Red</div>
<div class="dl" style="left:590px;top:235px;color:#fff">0.</div>
<div style="position:absolute;left:603px;top:242px;width:112px;height:1px;background:#fff"></div>
<div class="dl" style="left:731px;top:235px;color:#fff">0.</div>
<div style="position:absolute;left:744px;top:242px;width:172px;height:1px;background:#fff"></div>
<!-- buttons -->
<div style="position:absolute;left:698px;top:499px;width:73px;height:21px;box-sizing:border-box;border:2px solid #0078D7;background:#E1E1E1"></div>
<div style="position:absolute;left:779px;top:499px;width:73px;height:21px;box-sizing:border-box;border:1px solid #ADADAD;background:#E1E1E1"></div>
<div style="position:absolute;left:860px;top:499px;width:73px;height:21px;box-sizing:border-box;border:1px solid #ADADAD;background:#E1E1E1"></div>
<div class="dl" style="left:726px;top:503px">OK</div>
<div class="dl" style="left:798px;top:503px">Cancel</div>
<div class="dl" style="left:882px;top:503px">Reset</div>
<!-- grip -->
<svg style="position:absolute;left:930px;top:518px" width="11" height="11" shape-rendering="crispEdges"><g fill="#BDBDBD"><rect x="7" y="1" width="2" height="2"/><rect x="4" y="4" width="2" height="2"/><rect x="7" y="4" width="2" height="2"/><rect x="1" y="7" width="2" height="2"/><rect x="4" y="7" width="2" height="2"/><rect x="7" y="7" width="2" height="2"/></g></svg>

</body></html>
